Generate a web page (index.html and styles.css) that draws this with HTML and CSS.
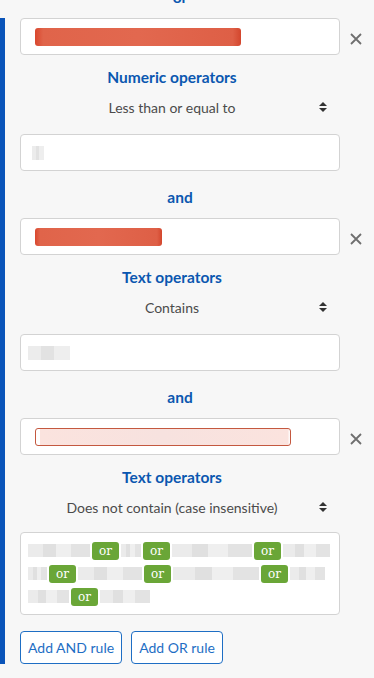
FILE: index.html
```html
<!DOCTYPE html>
<html lang="en">

<head>
    <meta charset="UTF-8">
    <meta name="viewport" content="width=device-width, initial-scale=1.0">
    <title>Rule builder</title>
    <link rel="stylesheet" href="styles.css">
</head>

<body>
    <div class="connector connector-top">or</div>

    <div class="rule-group">
        <div class="rule-row">
            <div class="field"><span class="redact redact-red" style="width: 206px"></span></div>
            <button class="remove" aria-label="Remove rule">
                <svg viewBox="0 0 12 12" width="12" height="12"><path d="M1 1L11 11M11 1L1 11" /></svg>
            </button>
        </div>
        <div class="op-title">Numeric operators</div>
        <div class="op-select">
            <span>Less than or equal to</span>
            <svg class="sort" viewBox="0 0 8 10" width="8" height="10"><path d="M4 0L8 4H0Z M4 10L0 6H8Z" /></svg>
        </div>
        <div class="field value"><span class="redact redact-gray" style="width: 12px"></span></div>

        <div class="connector">and</div>

        <div class="rule-row">
            <div class="field"><span class="redact redact-red" style="width: 127px"></span></div>
            <button class="remove" aria-label="Remove rule">
                <svg viewBox="0 0 12 12" width="12" height="12"><path d="M1 1L11 11M11 1L1 11" /></svg>
            </button>
        </div>
        <div class="op-title">Text operators</div>
        <div class="op-select">
            <span>Contains</span>
            <svg class="sort" viewBox="0 0 8 10" width="8" height="10"><path d="M4 0L8 4H0Z M4 10L0 6H8Z" /></svg>
        </div>
        <div class="field value value-text"><span class="redact redact-gray" style="width: 42px"></span></div>

        <div class="connector">and</div>

        <div class="rule-row">
            <div class="field"><span class="redact redact-pink" style="width: 256px"></span></div>
            <button class="remove" aria-label="Remove rule">
                <svg viewBox="0 0 12 12" width="12" height="12"><path d="M1 1L11 11M11 1L1 11" /></svg>
            </button>
        </div>
        <div class="op-title">Text operators</div>
        <div class="op-select">
            <span>Does not contain (case insensitive)</span>
            <svg class="sort" viewBox="0 0 8 10" width="8" height="10"><path d="M4 0L8 4H0Z M4 10L0 6H8Z" /></svg>
        </div>
        <div class="values">
            <div class="line">
                <span class="blur" style="width: 62px"></span><span class="badge">or</span><span class="blur" style="width: 20px"></span><span class="badge">or</span><span class="blur" style="width: 80px"></span><span class="badge">or</span><span class="blur" style="width: 47px"></span>
            </div>
            <div class="line">
                <span class="blur" style="width: 19px"></span><span class="badge">or</span><span class="blur" style="width: 64px"></span><span class="badge">or</span><span class="blur" style="width: 86px"></span><span class="badge">or</span><span class="blur" style="width: 35px"></span>
            </div>
            <div class="line">
                <span class="blur" style="width: 41px"></span><span class="badge">or</span><span class="blur" style="width: 50px"></span>
            </div>
        </div>

        <div class="actions">
            <button class="btn">Add AND rule</button>
            <button class="btn">Add OR rule</button>
        </div>
    </div>
</body>

</html>
```

FILE: styles.css
```css
* {
    margin: 0;
    padding: 0;
    box-sizing: border-box;
}

body {
    font-family: Lato, 'Open Sans', sans-serif;
    background: #f7f7f7;
    color: #4a4a4a;
    font-size: 14px;
}

.connector {
    text-align: center;
    width: 320px;
    margin: 16px 0 11px 0;
    line-height: 20px;
    font-weight: 700;
    font-size: 15.5px;
    color: #0b57b0;
}

.connector-top {
    margin-top: -13px;
    margin-left: 20px;
}

.rule-group {
    border-left: 5px solid #0a54b9;
    padding-left: 15px;
}

.rule-row {
    display: flex;
    align-items: center;
}

.field {
    width: 320px;
    height: 37px;
    background: #fff;
    border: 1px solid #d3d3d3;
    border-radius: 4px;
    padding: 0 14px;
    display: flex;
    align-items: center;
}

.value {
    margin-top: 12px;
    padding: 0 11px;
}

.value-text {
    padding: 0 7px;
}

.redact {
    display: block;
    height: 18px;
    border-radius: 3px;
}

.redact-red {
    background: linear-gradient(90deg, #d9472e 0, #e0644a 4%, #e2684f 50%, #de5f46 96%, #d3462d 100%);
}

.redact-gray {
    height: 14px;
    border-radius: 0;
    background: linear-gradient(90deg, #ececec 0 30%, #e2e2e2 30% 62%, #eeeeee 62% 100%);
}

.redact-pink {
    border: 1px solid #c4583f;
    background: linear-gradient(90deg, #fff 0 4px, #fbe3de 4px, #f7e2df 50%, #fbe3de 99%, #fff 100%);
}

.remove {
    margin-left: 10px;
    margin-top: 4px;
    width: 12px;
    height: 12px;
    border: none;
    background: none;
    display: flex;
}

.remove svg path {
    stroke: #6f6f6f;
    stroke-width: 1.8;
    fill: none;
}

.op-title {
    width: 320px;
    padding-right: 16px;
    margin-top: 12px;
    line-height: 20px;
    text-align: center;
    font-weight: 700;
    font-size: 15.5px;
    color: #0b57b0;
}

.op-select {
    position: relative;
    width: 320px;
    height: 30px;
    margin-top: 5px;
    padding-right: 16px;
    display: flex;
    align-items: center;
    justify-content: center;
    color: #4b4b4b;
}

.sort {
    position: absolute;
    right: 13px;
    top: 10px;
}

.sort path {
    fill: #333;
}

.values {
    width: 320px;
    margin-top: 10px;
    background: #fff;
    border: 1px solid #d3d3d3;
    border-radius: 4px;
    padding: 6px 7px;
}

.line {
    display: flex;
    align-items: center;
    height: 23px;
}

.blur {
    display: block;
    height: 13px;
    background: linear-gradient(90deg, #ebebeb 0 25%, #e0e0e0 25% 45%, #efefef 45% 70%, #e3e3e3 70% 100%);
}

.badge {
    display: block;
    width: 27px;
    height: 18px;
    margin: 0 2px;
    line-height: 18px;
    text-align: center;
    background: #6aa637;
    color: #fff;
    font-family: 'DejaVu Serif', 'Liberation Mono', serif;
    font-size: 12px;
    border-radius: 3px;
}

.actions {
    display: flex;
    gap: 9px;
    margin-top: 16px;
}

.btn {
    height: 33px;
    padding: 0 7px;
    background: #fff;
    border: 1px solid #1e6ec4;
    border-radius: 4px;
    color: #1e6ec4;
    font-family: Lato, 'Open Sans', sans-serif;
    font-size: 14px;
}
```
